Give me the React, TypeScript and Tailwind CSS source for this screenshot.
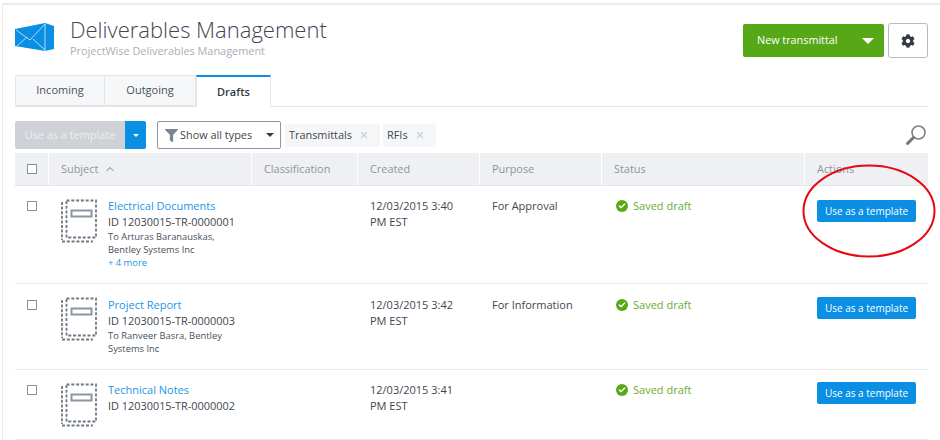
import { Check, ChevronUp, X } from 'lucide-react'
import { FaCog, FaFilter } from 'react-icons/fa'

const font = { fontFamily: '"Open Sans", sans-serif' }

function TemplateIcon() {
  return (
    <svg width="36" height="44" viewBox="0 0 36 44" fill="none" className="shrink-0">
      <path d="M1 3V41" stroke="#6f7986" strokeWidth="1.8" strokeDasharray="3 1.6" />
      <path d="M5.5 1.5H35V38.5H5.5Z" stroke="#6f7986" strokeWidth="1.8" strokeDasharray="3 1.8" />
      <path d="M1 42.5H32" stroke="#6f7986" strokeWidth="1.8" strokeDasharray="3 1.8" />
      <rect x="10.5" y="11.5" width="20" height="6" stroke="#8b96a3" strokeWidth="2" />
    </svg>
  )
}

function Logo() {
  return (
    <svg width="40" height="29" viewBox="0 0 40 29" className="shrink-0">
      <path d="M0 6 30 0 39 3V26L30 28 0 23Z" fill="#0a8fe4" />
      <path d="M1 7 15 17 30 1M2 23 12 14M18 16 30 27M30 1V28" fill="none" stroke="#ffffff" strokeWidth="0.8" opacity="0.85" />
    </svg>
  )
}

function SearchGlass() {
  return (
    <svg width="22" height="22" viewBox="0 0 22 22" fill="none">
      <circle cx="13.5" cy="8.5" r="6.5" stroke="#7a8087" strokeWidth="1.6" />
      <path d="M8.5 13.5 2.5 19.5" stroke="#6f757c" strokeWidth="3" strokeLinecap="round" />
    </svg>
  )
}

type Row = {
  title: string
  id: string
  to?: string[]
  more?: string
  date: string
  purpose: string
  height: string
  textTop: string
  boxTop: string
  iconTop: string
  buttonTop: string
}

const rows: Row[] = [
  {
    title: 'Electrical Documents',
    id: 'ID 12030015-TR-0000001',
    to: ['To Arturas Baranauskas,', 'Bentley Systems Inc'],
    more: '+ 4 more',
    date: '12/03/2015 3:40',
    purpose: 'For Approval',
    height: 'h-[98px]',
    textTop: 'pt-[12px]',
    boxTop: 'pt-[15px]',
    iconTop: 'mt-[1px]',
    buttonTop: 'pt-[14px]',
  },
  {
    title: 'Project Report',
    id: 'ID 12030015-TR-0000003',
    to: ['To Ranveer Basra, Bentley', 'Systems Inc'],
    date: '12/03/2015 3:42',
    purpose: 'For Information',
    height: 'h-[86px]',
    textTop: 'pt-[13px]',
    boxTop: 'pt-[16px]',
    iconTop: 'mt-0',
    buttonTop: 'pt-[13px]',
  },
  {
    title: 'Technical Notes',
    id: 'ID 12030015-TR-0000002',
    date: '12/03/2015 3:41',
    purpose: '',
    height: 'h-[70px]',
    textTop: 'pt-[12px]',
    boxTop: 'pt-[15px]',
    iconTop: 'mt-[1px]',
    buttonTop: 'pt-[12px]',
  },
]

const columns = 'grid grid-cols-[34px_203px_106px_122px_122px_203px_123px]'

function Box() {
  return <span className="block h-[10px] w-[10px] border border-[#8a8f96] bg-white" />
}

export default function App() {
  return (
    <div style={font} className="relative h-[440px] w-[940px] overflow-hidden bg-white">
      <div className="mt-[3px] ml-[2px] h-[437px] border-t-2 border-l border-[#ececec] pt-[9px] pr-[12px] pl-[12px]">
        {/* Header */}
        <div className="flex h-[62px] items-start">
          <div className="mt-[9px]">
            <Logo />
          </div>
          <div className="ml-[15px] flex-1">
            <h1 className="text-[22px] leading-[30px] font-light text-[#3f4650]">Deliverables Management</h1>
            <p className="-mt-[1px] text-[10.9px] leading-[16px] text-[#a7afb8]">ProjectWise Deliverables Management</p>
          </div>
          <div className="mt-[10px] flex h-[33px] w-[141px] items-center rounded-[2px] bg-[#57a817] pr-[10px] pl-[14px] text-[10.8px] text-white">
            <span className="flex-1">New transmittal</span>
            <span className="h-0 w-0 border-x-[6px] border-t-[6px] border-x-transparent border-t-white" />
          </div>
          <div className="mt-[9px] ml-[4px] flex h-[35px] w-[40px] items-center justify-center rounded-[3px] border border-[#b4bac2]">
            <FaCog size={14} className="text-[#343a42]" />
          </div>
        </div>

        {/* Tabs */}
        <div className="flex h-[31px] items-end border-b border-[#e3e5e8] text-[11px]">
          <div className="flex h-[31px] w-[90px] items-center justify-center border border-[#e3e5e8] bg-[#f6f7f8] text-[#49505a]">Incoming</div>
          <div className="flex h-[31px] w-[91px] items-center justify-center border-y border-r border-[#e3e5e8] bg-[#f6f7f8] text-[#49505a]">Outgoing</div>
          <div className="-mb-px flex h-[32px] w-[75px] items-center justify-center border-x border-t-2 border-x-[#e3e5e8] border-t-[#0a8fe4] bg-white font-semibold text-[#343a42]">Drafts</div>
        </div>

        {/* Toolbar */}
        <div className="mt-[14px] flex h-[28px] items-center text-[10.9px]">
          <div className="flex h-[28px] w-[110px] items-center justify-center rounded-l-[2px] bg-[#ced2d6] text-[#eceef0]">Use as a template</div>
          <div className="flex h-[28px] w-[21px] items-center justify-center rounded-r-[2px] bg-[#0a8fe4]">
            <span className="h-0 w-0 border-x-[3px] border-t-[3px] border-x-transparent border-t-white" />
          </div>
          <div className="ml-[11px] flex h-[28px] w-[124px] items-center rounded-[2px] border border-[#8f969e] pr-[6px] pl-[7px] text-[#3f4650]">
            <FaFilter size={13} className="shrink-0 text-[#7d8590]" />
            <span className="ml-[2px] flex-1">Show all types</span>
            <span className="h-0 w-0 border-x-[4px] border-t-[4px] border-x-transparent border-t-[#343a42]" />
          </div>
          <div className="ml-[4px] flex h-[23px] w-[95px] items-center rounded-[2px] bg-[#f5f6f7] pl-[4px] text-[#3f4650]">
            <span className="flex-1">Transmittals</span>
            <X size={10} strokeWidth={3.5} className="mr-[11px] text-[#d0d3d7]" />
          </div>
          <div className="ml-[3px] flex h-[23px] w-[53px] items-center rounded-[2px] bg-[#f5f6f7] pl-[4px] text-[#3f4650]">
            <span className="flex-1">RFIs</span>
            <X size={10} strokeWidth={3.5} className="mr-[11px] text-[#d0d3d7]" />
          </div>
          <div className="mr-[1px] ml-auto -mt-[1px]">
            <SearchGlass />
          </div>
        </div>

        {/* Table */}
        <div className={`${columns} mt-[4px] h-[33px] border-b border-[#e3e5e8] bg-[#eff0f3] text-[10.9px] text-[#8e959e]`}>
          <div className="flex items-center justify-center border-r border-white"><Box /></div>
          <div className="flex items-center gap-[6px] border-r border-white pl-[12px]">
            Subject <ChevronUp size={12} strokeWidth={2} className="text-[#6f757c]" />
          </div>
          <div className="flex items-center border-r border-white pl-[12px]">Classification</div>
          <div className="flex items-center border-r border-white pl-[12px]">Created</div>
          <div className="flex items-center border-r border-white pl-[12px]">Purpose</div>
          <div className="flex items-center border-r border-white pl-[12px]">Status</div>
          <div className="flex items-center pl-[12px]">Actions</div>
        </div>

        {rows.map((row) => (
          <div key={row.id} className={`${columns} ${row.height} border-b border-[#e8e9ec] text-[#3f4650]`}>
            <div className={`flex justify-center ${row.boxTop}`}><Box /></div>
            <div className={`flex gap-[11px] pl-[12px] ${row.textTop}`}>
              <div className={row.iconTop}>
                <TemplateIcon />
              </div>
              <div className="whitespace-nowrap">
                <div className="text-[11px] leading-[16px] text-[#1b95e5]">{row.title}</div>
                <div className="text-[10.9px] leading-[15px]">{row.id}</div>
                {row.to && (
                  <div className="mt-[1px] text-[9.4px] leading-[13px] text-[#49505a]">
                    {row.to.map((line) => (
                      <div key={line}>{line}</div>
                    ))}
                  </div>
                )}
                {row.more && <div className="text-[9.4px] leading-[14px] text-[#1b95e5]">{row.more}</div>}
              </div>
            </div>
            <div />
            <div className={`pl-[12px] text-[11px] leading-[16px] ${row.textTop}`}>
              {row.date}
              <br />
              PM EST
            </div>
            <div className={`pl-[12px] text-[11px] leading-[16px] ${row.textTop}`}>{row.purpose}</div>
            <div className={`flex h-fit items-center gap-[5px] pl-[14px] text-[11px] leading-[16px] text-[#6aae32] ${row.textTop}`}>
              <span className="flex h-[12px] w-[12px] items-center justify-center rounded-full bg-[#57a817]">
                <Check size={8} strokeWidth={4} className="text-white" />
              </span>
              Saved draft
            </div>
            <div className={`pl-[12px] ${row.buttonTop}`}>
              <div className="flex h-[22px] w-[99px] items-center justify-center rounded-[2px] bg-[#0a8fe4] text-[10px] text-white">Use as a template</div>
            </div>
          </div>
        ))}
      </div>

      {/* Red annotation circle */}
      <svg width="136" height="96" viewBox="0 0 136 96" className="absolute top-[163px] left-[801px]" fill="none">
        <ellipse cx="68" cy="48" rx="65.5" ry="45.5" stroke="#e8080f" strokeWidth="2" />
      </svg>
    </div>
  )
}
